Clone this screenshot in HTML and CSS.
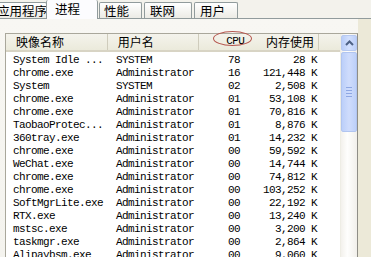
FILE: index.html
```html
<!DOCTYPE html>
<html>
<head>
<meta charset="utf-8">
<link rel="stylesheet" href="styles.css">
</head>
<body>
<div class="window">
  <div class="tabs">
    <div class="tab first">应用程序</div>
    <div class="tab active">进程</div>
    <div class="tab t3">性能</div>
    <div class="tab t4">联网</div>
    <div class="tab t5">用户</div>
  </div>
  <div class="page">
    <div class="list">
      <div class="table">
        <div class="head">
          <div class="c1 h">映像名称</div>
          <div class="c2 h">用户名</div>
          <div class="c3 h cpu">CPU</div>
          <div class="c4 h">内存使用</div>
          <div class="c5 h"></div>
        </div>
        <div class="rows">
          <div class="row"><span class="c1">System Idle ...</span><span class="c2">SYSTEM</span><span class="c3">78</span><span class="c4">28 K</span></div>
          <div class="row"><span class="c1">chrome.exe</span><span class="c2">Administrator</span><span class="c3">16</span><span class="c4">121,448 K</span></div>
          <div class="row"><span class="c1">System</span><span class="c2">SYSTEM</span><span class="c3">02</span><span class="c4">2,508 K</span></div>
          <div class="row"><span class="c1">chrome.exe</span><span class="c2">Administrator</span><span class="c3">01</span><span class="c4">53,108 K</span></div>
          <div class="row"><span class="c1">chrome.exe</span><span class="c2">Administrator</span><span class="c3">01</span><span class="c4">70,816 K</span></div>
          <div class="row"><span class="c1">TaobaoProtec...</span><span class="c2">Administrator</span><span class="c3">01</span><span class="c4">8,876 K</span></div>
          <div class="row"><span class="c1">360tray.exe</span><span class="c2">Administrator</span><span class="c3">01</span><span class="c4">14,232 K</span></div>
          <div class="row"><span class="c1">chrome.exe</span><span class="c2">Administrator</span><span class="c3">00</span><span class="c4">59,592 K</span></div>
          <div class="row"><span class="c1">WeChat.exe</span><span class="c2">Administrator</span><span class="c3">00</span><span class="c4">14,744 K</span></div>
          <div class="row"><span class="c1">chrome.exe</span><span class="c2">Administrator</span><span class="c3">00</span><span class="c4">74,812 K</span></div>
          <div class="row"><span class="c1">chrome.exe</span><span class="c2">Administrator</span><span class="c3">00</span><span class="c4">103,252 K</span></div>
          <div class="row"><span class="c1">SoftMgrLite.exe</span><span class="c2">Administrator</span><span class="c3">00</span><span class="c4">22,192 K</span></div>
          <div class="row"><span class="c1">RTX.exe</span><span class="c2">Administrator</span><span class="c3">00</span><span class="c4">13,240 K</span></div>
          <div class="row"><span class="c1">mstsc.exe</span><span class="c2">Administrator</span><span class="c3">00</span><span class="c4">3,200 K</span></div>
          <div class="row"><span class="c1">taskmgr.exe</span><span class="c2">Administrator</span><span class="c3">00</span><span class="c4">2,864 K</span></div>
          <div class="row"><span class="c1">Alipaybsm.exe</span><span class="c2">Administrator</span><span class="c3">00</span><span class="c4">9,060 K</span></div>
        </div>
      </div>
      <div class="scrollbar">
        <div class="sbtn">
          <svg width="9" height="6" viewBox="0 0 9 6"><path d="M1 5 L4.5 1.5 L8 5" fill="none" stroke="#4D6185" stroke-width="2"/></svg>
        </div>
        <div class="thumb">
          <div class="grip"></div><div class="grip"></div><div class="grip"></div><div class="grip"></div>
        </div>
        <div class="track"></div>
      </div>
    </div>
  </div>
  <div class="mark"></div>
</div>
</body>
</html>
```
FILE: styles.css
```css
html, body {
  margin: 0;
  padding: 0;
}
body {
  width: 371px;
  height: 257px;
  overflow: hidden;
  background: #ECE9D8;
  font-family: "Noto Sans CJK SC", "Liberation Sans", sans-serif;
  font-size: 12px;
  color: #000;
}
.window {
  position: relative;
  width: 371px;
  height: 257px;
}
.tabs {
  display: flex;
  align-items: flex-end;
  height: 18px;
  border-bottom: 1px solid #919B9C;
  background: #F3F2EC;
}
.tab {
  box-sizing: border-box;
  height: 16px;
  width: 44px;
  margin-right: 2px;
  padding-left: 4px;
  line-height: 15px;
  font-size: 12.5px;
  border: 1px solid #919B9C;
  border-bottom: none;
  border-radius: 2px 2px 0 0;
  background: linear-gradient(#FFFFFF, #ECEBE5);
  white-space: nowrap;
}
.tab.first {
  width: 56px;
  margin-left: -9px;
  padding-left: 5px;
  margin-right: 0;
}
.tab.active {
  position: relative;
  top: 1px;
  height: 19px;
  width: 52px;
  margin-left: -1px;
  margin-right: 1px;
  padding-left: 8px;
  line-height: 17px;
  background: #FCFCFE;
  border-top: none;
}
.tab.t3 { width: 43px; }
.tab.t4 { width: 48px; padding-left: 5px; }
.tab.t5 { width: 44px; padding-left: 5px; }
.page {
  height: 238px;
  padding: 14px 0 0 5px;
  box-sizing: border-box;
  width: 358px;
  background: linear-gradient(#F8F7F3, #F4F3EE);
}
.list {
  display: flex;
  width: 353px;
  height: 230px;
  box-sizing: border-box;
  border: 1px solid #A9A79B;
  border-right-color: #8E8D86;
  background: #FFFFFF;
}
.table {
  flex: 1;
  overflow: hidden;
}
.head {
  display: flex;
  height: 18px;
  box-sizing: border-box;
  background: linear-gradient(#F4F3EC, #EBEADB);
  border-bottom: 2px solid #D8D4C4;
}
.h {
  box-sizing: border-box;
  height: 16px;
  line-height: 16px;
  border-right: 1px solid #CFCCBC;
  white-space: nowrap;
}
.c1 { width: 102px; }
.c2 { width: 92px; }
.c3 { width: 55px; }
.c4 { width: 65px; }
.c5 { width: 21px; border-right: none; }
.head .c1 { padding-left: 10px; }
.head .c2 { padding-left: 10px; }
.head .c3 {
  border-right-color: transparent;
  text-align: right;
  padding-right: 9px;
  line-height: 12px;
  padding-top: 1px;
  font-family: "Liberation Mono", monospace;
  font-size: 11px;
  letter-spacing: -0.6px;
}
.head .c4 { text-align: right; padding-right: 4px; }
.rows {
  padding-top: 2px;
}
.row {
  display: flex;
  height: 13px;
  line-height: 13px;
  font-family: "Liberation Mono", monospace;
  font-size: 11px;
  letter-spacing: -0.6px;
  white-space: nowrap;
}
.row span { display: block; box-sizing: border-box; }
.row .c1 { padding-left: 7px; }
.row .c2 { padding-left: 8px; }
.row .c3 { text-align: right; padding-right: 15px; }
.row .c4 { text-align: right; padding-right: 3px; }
.scrollbar {
  width: 16px;
  display: flex;
  flex-direction: column;
  background: linear-gradient(90deg, #F3F1EC, #FEFEFD 40%, #F1EFEA);
  border-left: 1px solid #EEEDE5;
}
.sbtn {
  box-sizing: border-box;
  height: 16px;
  margin-top: 1px;
  border: 1px solid #B7C9F0;
  border-radius: 2px;
  background: linear-gradient(90deg, #B9CDF8, #D3E0FD 50%, #BCCFF9);
  display: flex;
  align-items: center;
  justify-content: center;
}
.thumb {
  box-sizing: border-box;
  height: 80px;
  margin-top: 1px;
  border: 1px solid #B1C5F0;
  border-radius: 2px;
  background: linear-gradient(90deg, #BCCFF9, #CFDCFC 50%, #BDD0F9);
  display: flex;
  flex-direction: column;
  justify-content: center;
  align-items: center;
  gap: 2px;
}
.grip {
  width: 6px;
  height: 1px;
  background: #8EA7E3;
}
.track { flex: 1; }
.mark {
  position: absolute;
  left: 213px;
  top: 31px;
  width: 39px;
  height: 15px;
  box-sizing: border-box;
  border: 1.6px solid #B5564E;
  border-radius: 50%;
}
```
